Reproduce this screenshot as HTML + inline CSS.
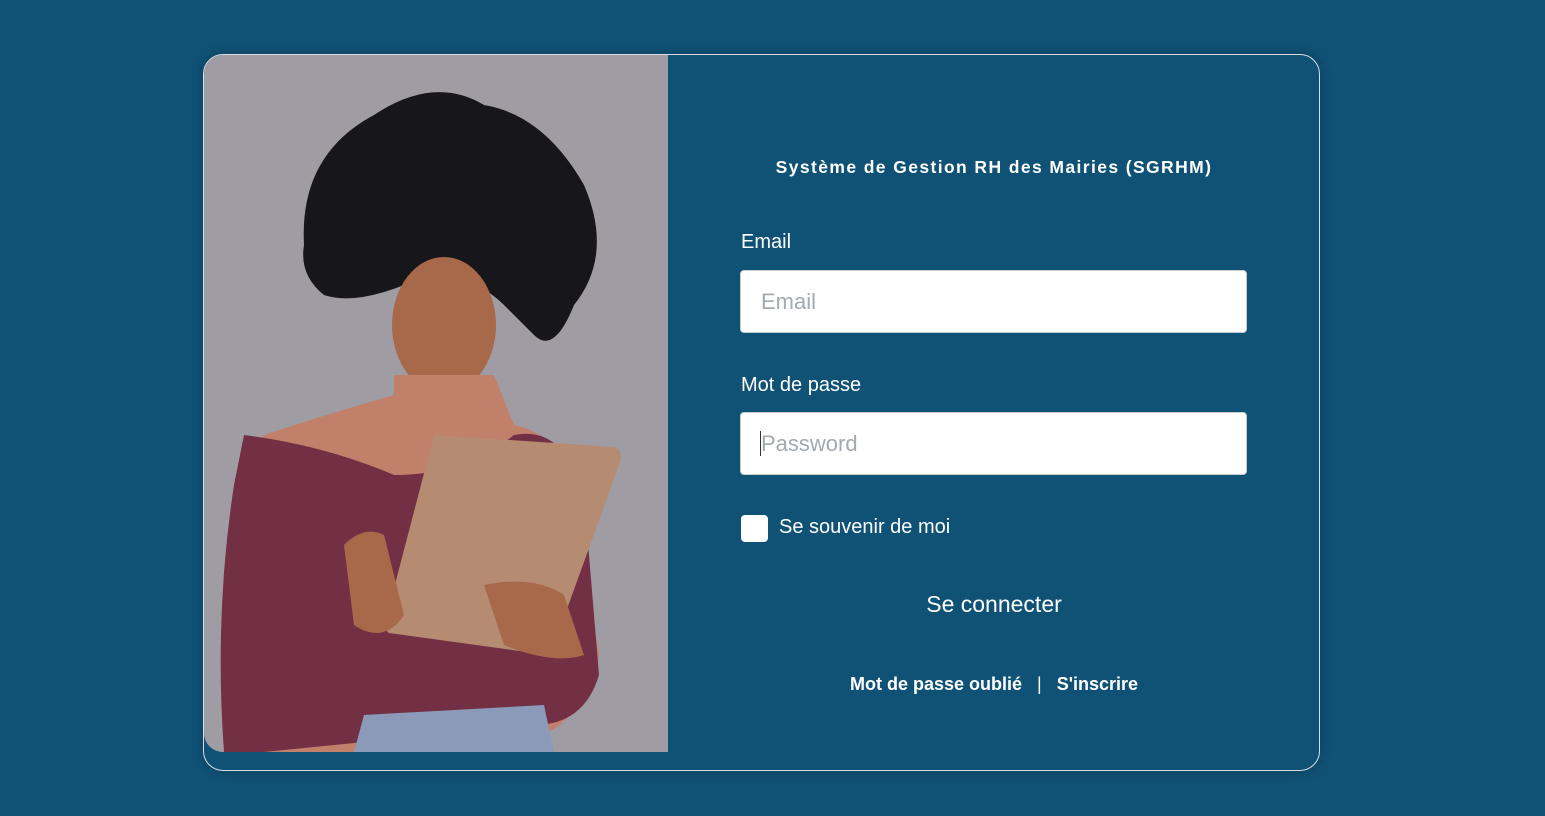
<!DOCTYPE html>
<html><head><meta charset="utf-8"><style>
html,body{margin:0;padding:0;width:1545px;height:816px;background:#105276;overflow:hidden;font-family:"Liberation Sans",sans-serif;color:#fff}
.card{position:absolute;left:203px;top:54px;width:1115px;height:715px;border:1px solid #d8dee4;border-radius:20px;box-shadow:0 0 12px rgba(0,0,0,.25)}
.photo{position:absolute;left:0px;top:0px;width:464px;height:697px;border-radius:19px 0 0 19px;overflow:hidden;background:#9e9aa2}
.title{position:absolute;left:540px;width:500px;top:102px;text-align:center;font-weight:bold;font-size:17.5px;letter-spacing:1.4px}
.lbl{position:absolute;left:537px;font-size:20px}
.inp{position:absolute;left:536px;width:507px;height:63px;background:#fff;border:1px solid #ccc;border-radius:4px;color:#a3a9b0;font-size:22px;line-height:61px;padding-left:20px;box-sizing:border-box}
.cb{position:absolute;left:537px;top:460px;width:27px;height:27px;background:#fff;border-radius:4px}
</style></head><body>
<div class="card">
 <div class="photo">
  <svg width="464" height="697" viewBox="0 0 464 697">
   <rect width="464" height="697" fill="#a09ca4"/>
   <path d="M100 190 Q95 100 170 60 Q230 20 280 50 Q340 60 380 130 Q410 200 370 250 Q350 300 330 280 L300 250 Q260 210 200 230 Q150 250 120 240 Q95 220 100 190Z" fill="#17161a"/>
   <ellipse cx="240" cy="270" rx="52" ry="68" fill="#a8684a"/>
   <path d="M190 320 L290 320 L310 370 Q360 380 370 440 L395 600 Q380 660 340 680 L220 697 L40 697 L20 560 Q25 420 60 380 Q120 360 190 340Z" fill="#c0806a"/>
   <path d="M40 380 Q120 390 190 420 Q260 420 310 380 Q360 370 380 440 L395 620 Q380 670 330 670 L60 697 L20 697 Q10 560 30 430Z" fill="#733044"/>
   <path d="M230 380 L410 392 Q420 395 415 410 L350 590 Q345 600 330 598 L185 578 Q180 575 183 560 Z" fill="#b58b72"/>
   <path d="M140 490 Q160 470 180 480 L200 560 Q180 590 150 570Z" fill="#a8684a"/>
   <path d="M280 530 Q330 520 360 540 L380 600 Q350 610 300 590Z" fill="#a8684a"/>
   <path d="M160 660 L340 650 L350 697 L150 697Z" fill="#8a9ab8"/>
  </svg>
 </div>
 <div class="title">Système de Gestion RH des Mairies (SGRHM)</div>
 <div class="lbl" style="top:176px">Email</div>
 <div class="inp" style="top:215px">Email</div>
 <div class="lbl" style="top:319px">Mot de passe</div>
 <div class="inp" style="top:357px"><span style="border-left:1px solid #333;margin-left:-1px"></span>Password</div>
 <div class="cb"></div>
 <div class="lbl" style="left:575px;top:461px">Se souvenir de moi</div>
 <div style="position:absolute;left:540px;width:500px;top:536px;text-align:center;font-size:23px">Se connecter</div>
 <div style="position:absolute;left:540px;width:500px;top:619px;text-align:center;font-size:18px;font-weight:bold">Mot de passe oublié &nbsp; <span style="font-weight:normal">|</span> &nbsp; S'inscrire</div>
</div>
</body></html>
